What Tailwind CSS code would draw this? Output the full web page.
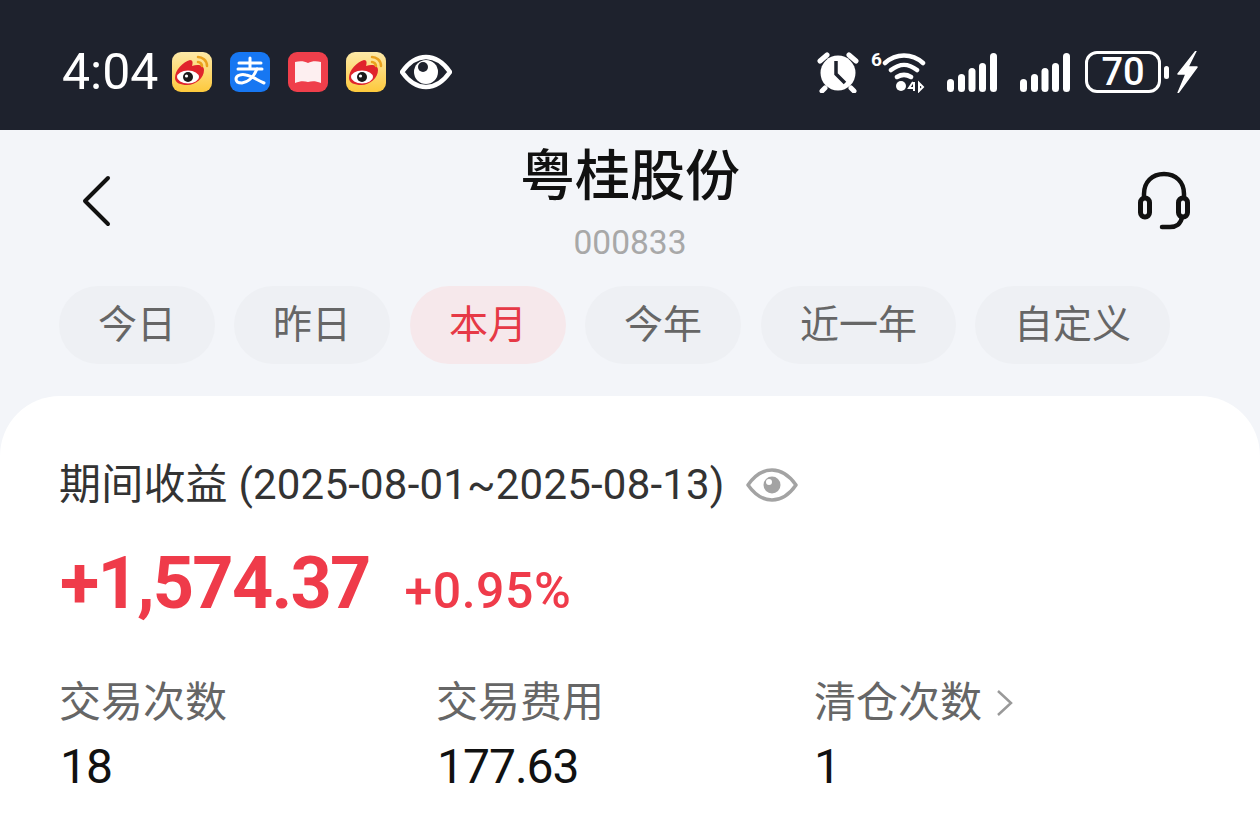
<!DOCTYPE html>
<html lang="zh-CN">
<head>
    <meta charset="UTF-8">
    <meta name="viewport" content="width=device-width, initial-scale=1.0">
    <title>粤桂股份</title>
    <script src="https://cdn.jsdelivr.net/npm/@tailwindcss/browser@4"></script>
</head>
<body class="h-[819px] w-[1260px] overflow-hidden bg-[#f3f5f9] font-['Roboto','Noto_Sans_CJK_SC',sans-serif]">
    <!-- Status bar -->
    <div class="flex h-[130px] items-center justify-between bg-[#1e222d] pl-[62px] pr-[62px] pt-[14px] text-white">
        <div class="flex items-center">
            <span class="w-[98px] text-[50px] leading-none">4:04</span>
            <svg class="ml-[12px] h-[40px] w-[40px]" viewBox="0 0 40 40">
                <defs><linearGradient id="wb" x1="0" y1="0" x2="0" y2="1"><stop offset="0" stop-color="#fde9a8"/><stop offset="1" stop-color="#fdc93c"/></linearGradient></defs>
                <rect width="40" height="40" rx="9" fill="url(#wb)"/>
                <path d="M3 26c0-8 8-16 15-18 3 0 3 3 2 6 6-2 12-1 12 4 0 8-8 15-17 15C9 33 3 31 3 26z" fill="#e0242c"/>
                <ellipse cx="16" cy="25" rx="11" ry="6.500" fill="#fff"/>
                <circle cx="16" cy="25" r="5" fill="#1a1a1a"/>
                <circle cx="14.500" cy="24" r="1.600" fill="#fff"/>
                <path d="M26 5c4 0 9 3 9 9M26 10c2 0 4 2 4 4" fill="none" stroke="#eaa21e" stroke-width="2.500" stroke-linecap="round"/>
            </svg>
            <svg class="ml-[18px] h-[40px] w-[40px]" viewBox="0 0 40 40">
                <rect width="40" height="40" rx="9" fill="#1777f2"/>
                <path d="M20 6v11M9 11h22M8 17h24" fill="none" stroke="#fff" stroke-width="3" stroke-linecap="round"/>
                <path d="M27 17c-3 7-8 13-15 14-3 0-6-1-6-4 0-4 6-5 10-4 6 1 11 5 18 8" fill="none" stroke="#fff" stroke-width="3" stroke-linecap="round"/>
            </svg>
            <svg class="ml-[18px] h-[40px] w-[40px]" viewBox="0 0 40 40">
                <rect width="40" height="40" rx="9" fill="#ef3f4b"/>
                <path d="M7 10c5-1 9-1 13 1 4-2 8-2 13-1v21c-5-2-9-2-13-1-4-1-8-1-13 1z" fill="#fdeff0"/>
            </svg>
            <svg class="ml-[18px] h-[40px] w-[40px]" viewBox="0 0 40 40">
                <rect width="40" height="40" rx="9" fill="url(#wb)"/>
                <path d="M3 26c0-8 8-16 15-18 3 0 3 3 2 6 6-2 12-1 12 4 0 8-8 15-17 15C9 33 3 31 3 26z" fill="#e0242c"/>
                <ellipse cx="16" cy="25" rx="11" ry="6.500" fill="#fff"/>
                <circle cx="16" cy="25" r="5" fill="#1a1a1a"/>
                <circle cx="14.500" cy="24" r="1.600" fill="#fff"/>
                <path d="M26 5c4 0 9 3 9 9M26 10c2 0 4 2 4 4" fill="none" stroke="#eaa21e" stroke-width="2.500" stroke-linecap="round"/>
            </svg>
            <svg class="ml-[14px] h-[36px] w-[52px]" viewBox="0 0 52 36">
                <path d="M2 18C9 8 17 3 26 3s17 5 24 15c-7 10-15 15-24 15S9 28 2 18z" fill="none" stroke="#fff" stroke-width="4.500" stroke-linejoin="round"/>
                <circle cx="26" cy="18" r="12" fill="#fff"/>
                <circle cx="23" cy="13" r="5" fill="#1e222d"/>
            </svg>
        </div>
        <div class="flex items-center">
            <svg class="h-[42px] w-[42px]" viewBox="0 0 42 42">
                <circle cx="21" cy="22" r="17.500" fill="#fff"/>
                <path d="M19 10v13l9 9" fill="none" stroke="#1e222d" stroke-width="3.500"/>
                <path d="M3 10l7-6M39 10l-7-6M8 37l-3 3M34 37l3 3" fill="none" stroke="#fff" stroke-width="5" stroke-linecap="round"/>
            </svg>
            <div class="relative ml-[12px] h-[42px] w-[56px]">
                <span class="absolute left-0 top-[-1px] text-[19px] font-bold leading-none">6</span>
                <svg class="absolute left-[11px] top-0 h-[42px] w-[45px]" viewBox="0 0 45 42">
                    <path d="M3 12C14 2 30 2 41 12M9 19c9-7 17-7 26 0M15 26c5-3 9-3 14 0" fill="none" stroke="#fff" stroke-width="4.500" stroke-linecap="round"/>
                    <circle cx="19" cy="35" r="5" fill="#fff"/>
                    <path d="M31 31l-4 6h6M32 31v9M37 32v8l4-4z" fill="none" stroke="#fff" stroke-width="2"/>
                </svg>
            </div>
            <svg class="ml-[20px] h-[40px] w-[50px]" viewBox="0 0 50 40">
                <rect x="0" y="27" width="7" height="13" rx="3.500" fill="#fff"/>
                <rect x="11" y="22" width="7" height="18" rx="3.500" fill="#fff"/>
                <rect x="21.500" y="16" width="7" height="24" rx="3.500" fill="#fff"/>
                <rect x="32" y="11" width="7" height="29" rx="3.500" fill="#fff"/>
                <rect x="43" y="1" width="7" height="39" rx="3.500" fill="#fff"/>
            </svg>
            <svg class="ml-[23px] h-[40px] w-[50px]" viewBox="0 0 50 40">
                <rect x="0" y="27" width="7" height="13" rx="3.500" fill="#fff"/>
                <rect x="11" y="22" width="7" height="18" rx="3.500" fill="#fff"/>
                <rect x="21.500" y="16" width="7" height="24" rx="3.500" fill="#fff"/>
                <rect x="32" y="11" width="7" height="29" rx="3.500" fill="#fff"/>
                <rect x="43" y="1" width="7" height="39" rx="3.500" fill="#fff"/>
            </svg>
            <div class="ml-[15px] flex h-[42px] w-[76px] items-center justify-center rounded-[12px] border-[3px] border-white text-[38px] font-medium leading-none">70</div>
            <div class="ml-[3px] h-[13px] w-[5px] rounded-full bg-white"></div>
            <svg class="ml-[8px] h-[42px] w-[21px]" viewBox="0 0 21 42">
                <path d="M19 0L1 23h8L1 42l19-26h-9z" fill="#fff" stroke="#fff" stroke-width="1.500" stroke-linejoin="round"/>
            </svg>
        </div>
    </div>

    <!-- Header -->
    <div class="relative h-[156px]">
        <svg class="absolute left-[81px] top-[45px] h-[52px] w-[32px]" viewBox="0 0 32 52">
            <path d="M27 3L4 26l23 23" fill="none" stroke="#111" stroke-width="4" stroke-linecap="round" stroke-linejoin="round"/>
        </svg>
        <div class="pt-[17px] text-center text-[55px] font-medium leading-[58px] text-[#111]">粤桂股份</div>
        <div class="mt-[18px] text-center text-[33.500px] leading-[40px] text-[#a8a8a8]">000833</div>
        <svg class="absolute left-[1137px] top-[41px] h-[60px] w-[54px]" viewBox="0 0 54 60">
            <path d="M7 26V23C7 11 15 3 27 3s20 8 20 20v3" fill="none" stroke="#111" stroke-width="4.500"/>
            <rect x="3.500" y="27" width="9" height="19" rx="4.500" fill="none" stroke="#111" stroke-width="5"/>
            <rect x="41.500" y="27" width="9" height="19" rx="4.500" fill="none" stroke="#111" stroke-width="5"/>
            <path d="M45 46c-1 7-6 10-12 10H25" fill="none" stroke="#111" stroke-width="4.500" stroke-linecap="round"/>
        </svg>
    </div>

    <!-- Period tabs -->
    <div class="flex pl-[59px] text-[39px] leading-none text-[#666]">
        <div class="flex h-[78px] w-[156px] items-center justify-center rounded-full bg-[#eef0f4]">今日</div>
        <div class="ml-[19px] flex h-[78px] w-[156px] items-center justify-center rounded-full bg-[#eef0f4]">昨日</div>
        <div class="ml-[20px] flex h-[78px] w-[156px] items-center justify-center rounded-full bg-[#f6e8eb] text-[#e63946]">本月</div>
        <div class="ml-[19px] flex h-[78px] w-[156px] items-center justify-center rounded-full bg-[#eef0f4]">今年</div>
        <div class="ml-[20px] flex h-[78px] w-[195px] items-center justify-center rounded-full bg-[#eef0f4]">近一年</div>
        <div class="ml-[19px] flex h-[78px] w-[195px] items-center justify-center rounded-full bg-[#eef0f4]">自定义</div>
    </div>

    <!-- Summary card -->
    <div class="mt-[32px] h-[423px] rounded-t-[60px] bg-white pl-[60px] pt-[62px]">
        <div class="-ml-px flex h-[54px] items-center text-[#333]">
            <span class="text-[42px] leading-none tracking-[0.2px]">期间收益 (2025-08-01~2025-08-13)</span>
            <svg class="ml-[21px] h-[36px] w-[52px]" viewBox="0 0 52 36">
                <path d="M2 18C9 8 17 3 26 3s17 5 24 15c-7 10-15 15-24 15S9 28 2 18z" fill="none" stroke="#a3a3a3" stroke-width="3.500" stroke-linejoin="round"/>
                <circle cx="26" cy="18" r="8.500" fill="#a3a3a3"/>
                <circle cx="23" cy="15" r="3" fill="#fff"/>
            </svg>
        </div>
        <div class="mt-[34px] flex h-[76px] items-baseline text-[#ef3b4a]">
            <span class="text-[72px] font-bold leading-[76px] tracking-[-1.800px]">+1,574.37</span>
            <span class="ml-[35px] text-[50px] font-medium leading-none tracking-[0.5px]">+0.95%</span>
        </div>
        <div class="mt-[56px] grid grid-cols-[377px_377px_1fr]">
            <div>
                <div class="-ml-px text-[42px] leading-[50px] text-[#666]">交易次数</div>
                <div class="mt-[14px] text-[48px] leading-[50px] tracking-[-1px] text-[#111]">18</div>
            </div>
            <div>
                <div class="-ml-px text-[42px] leading-[50px] text-[#666]">交易费用</div>
                <div class="mt-[14px] text-[48px] leading-[50px] tracking-[-1px] text-[#111]">177.63</div>
            </div>
            <div>
                <div class="flex items-center text-[42px] leading-[50px] text-[#666]">
                    清仓次数
                    <svg class="ml-[13px] h-[30px] w-[20px]" viewBox="0 0 20 30">
                        <path d="M3 3l13 12L3 27" fill="none" stroke="#999" stroke-width="2.500"/>
                    </svg>
                </div>
                <div class="mt-[14px] text-[48px] leading-[50px] tracking-[-1px] text-[#111]">1</div>
            </div>
        </div>
    </div>
</body>
</html>
